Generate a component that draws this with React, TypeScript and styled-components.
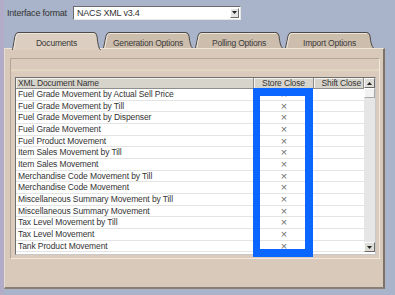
import React from "react";
import styled, { createGlobalStyle } from "styled-components";

const Global = createGlobalStyle`
  html, body { margin: 0; padding: 0; }
  body {
    background: #a9b3c9;
    font-family: "Liberation Sans", Arial, sans-serif;
    color: #333;
  }
`;

const Page = styled.div`
  position: relative;
  width: 395px;
  height: 295px;
  overflow: hidden;
  background: linear-gradient(90deg, #b2acc8 0px, #b2acc8 4px, #a9b3c9 4px);
`;

const TopRow = styled.div`
  display: flex;
  align-items: center;
  height: 15px;
  padding: 5px 0 0 7px;
`;

const Label = styled.span`
  width: 66px;
  font-size: 9px;
  letter-spacing: -0.2px;
  color: #333;
`;

const Select = styled.div`
  display: flex;
  align-items: center;
  width: 168px;
  height: 14px;
  box-sizing: border-box;
  background: #fff;
  border: 1px solid;
  border-color: #6a6a6a #e8e8e8 #e8e8e8 #6a6a6a;
  padding: 0 1px 0 3px;
  font-size: 9px;
  letter-spacing: -0.2px;
`;

const SelectText = styled.span`
  flex: 1;
`;

const DropButton = styled.span`
  width: 9px;
  height: 10px;
  box-sizing: border-box;
  background: #e4e4e4;
  border: 1px solid;
  border-color: #fff #707070 #707070 #fff;
  display: flex;
  align-items: center;
  justify-content: center;
`;

const TabBar = styled.div`
  display: flex;
  gap: 2px;
  margin-top: 12px;
  padding-left: 12px;
  height: 16px;
  position: relative;
  z-index: 2;
`;

const Tab = styled.div<{ $active?: boolean; $w: number }>`
  position: relative;
  width: ${(p) => p.$w}px;
  height: ${(p) => (p.$active ? 18 : 16)}px;
  display: flex;
  justify-content: center;
  padding-top: 6px;
  box-sizing: border-box;
  font-size: 8.5px;
  letter-spacing: -0.2px;
  color: ${(p) => (p.$active ? "#3a3a3a" : "#3c3c3c")};
  svg { position: absolute; left: 0; top: 0; z-index: -1; }
`;

const Panel = styled.div`
  position: relative;
  margin-left: 4px;
  width: 381px;
  height: 241px;
  box-sizing: border-box;
  background: #d8c9ba;
  border-top: 1px solid #eee4d8;
  border-left: 1px solid #e6dccf;
  border-right: 2px solid #7c7268;
  border-bottom: 2px solid #8a7f74;
  padding: 9px 0 0 5px;
`;

const Frame = styled.div`
  width: 370px;
  height: 201px;
  box-sizing: border-box;
  border: 1px solid;
  border-color: #b4a696 #f0e8de #f0e8de #b4a696;
  background: linear-gradient(180deg, #dacbbc 0px, #dacbbc 10px, #e6dcc4 11px, #dacbbc 13px);
  padding: 18px 0 0 4px;
`;

const List = styled.div`
  position: relative;
  display: grid;
  grid-template-columns: 238px 60px 50px 11px;
  grid-template-rows: 11px repeat(14, 11.67px);
  width: 361px;
  height: 178px;
  box-sizing: border-box;
  border: 1px solid;
  border-color: #707070 #c8c8c8 #c8c8c8 #707070;
  background: #fff;
  overflow: hidden;
`;

const Head = styled.div<{ $align: string }>`
  background: #d7d4cc;
  border-right: 1px solid #8e8e8e;
  border-bottom: 1px solid #8e8e8e;
  box-shadow: inset 1px 1px 0 #f4f2ee;
  font-size: 8.5px;
  letter-spacing: -0.15px;
  line-height: 10px;
  color: #333;
  text-align: ${(p) => p.$align};
  padding: 0 2px 0 2px;
  white-space: nowrap;
  overflow: hidden;
`;

const Cell = styled.div<{ $center?: boolean; $first?: boolean }>`
  box-sizing: border-box;
  border-bottom: 1px solid #e4e4e4;
  border-right: ${(p) => (p.$first ? "1px solid #e4e4e4" : "none")};
  font-size: ${(p) => (p.$center ? "11px" : "8.5px")};
  letter-spacing: ${(p) => (p.$center ? "0" : "-0.1px")};
  line-height: 11.5px;
  color: ${(p) => (p.$center ? "#707070" : "#333")};
  text-align: ${(p) => (p.$center ? "center" : "left")};
  padding-left: ${(p) => (p.$center ? "0" : "2px")};
  white-space: nowrap;
  overflow: hidden;
`;

const Scroll = styled.div`
  grid-column: 4;
  grid-row: 1 / span 15;
  display: flex;
  flex-direction: column;
  background: #e6e6e6;
`;

const ScrollBtn = styled.div`
  height: 10px;
  box-sizing: border-box;
  background: #dedcd6;
  border: 1px solid;
  border-color: #fafafa #6c6c6c #6c6c6c #fafafa;
  display: flex;
  align-items: center;
  justify-content: center;
`;

const Thumb = styled.div`
  height: 10px;
  box-sizing: border-box;
  background: #f2f2f2;
  border: 1px solid;
  border-color: #fff #a8a8a8 #a8a8a8 #fff;
`;

const Track = styled.div`
  flex: 1;
`;

const Highlight = styled.div`
  position: absolute;
  left: 253px;
  top: 88px;
  width: 60px;
  height: 169px;
  box-sizing: border-box;
  border: 8px solid #0a66ff;
  border-left-width: 7px;
  z-index: 5;
`;

const Tri = ({ up }: { up?: boolean }) => (
  <svg width="5" height="3" viewBox="0 0 5 3">
    <path d={up ? "M0 3 L2.5 0 L5 3 Z" : "M0 0 L5 0 L2.5 3 Z"} fill="#222" />
  </svg>
);

const TabShape = ({ w, active }: { w: number; active?: boolean }) => {
  const h = active ? 18 : 16;
  const d = `M0.5 ${h} L3 4 Q3.6 1 6 0.5 L${w - 7} 0.5 Q${w - 4.5} 0.8 ${w - 4} 4 Q${w - 3} ${h - 2} ${w - 0.5} ${h}`;
  return (
    <svg width={w} height={h} viewBox={`0 0 ${w} ${h}`}>
      <path d={`${d} Z`} fill={active ? "#dccec0" : "#cdbdac"} stroke="none" />
      <path d={d} fill="none" stroke="#4a4a4a" strokeWidth="1" />
      <path d={`M1.8 ${h} L4 4.5 Q4.5 2 6.5 1.5 L${w - 7} 1.5`} fill="none" stroke="#efe6da" strokeWidth="1" />
    </svg>
  );
};

const tabs = [
  { label: "Documents", w: 89, active: true },
  { label: "Generation Options", w: 90 },
  { label: "Polling Options", w: 88 },
  { label: "Import Options", w: 89 },
];

const docs = [
  "Fuel Grade Movement by Actual Sell Price",
  "Fuel Grade Movement by Till",
  "Fuel Grade Movement by Dispenser",
  "Fuel Grade Movement",
  "Fuel Product Movement",
  "Item Sales Movement by Till",
  "Item Sales Movement",
  "Merchandise Code Movement by Till",
  "Merchandise Code Movement",
  "Miscellaneous Summary Movement by Till",
  "Miscellaneous Summary Movement",
  "Tax Level Movement by Till",
  "Tax Level Movement",
  "Tank Product Movement",
];

export default function App() {
  return (
    <Page>
      <Global />
      <TopRow>
        <Label>Interface format</Label>
        <Select>
          <SelectText>NACS XML v3.4</SelectText>
          <DropButton>
            <Tri />
          </DropButton>
        </Select>
      </TopRow>
      <TabBar>
        {tabs.map((t) => (
          <Tab key={t.label} $active={t.active} $w={t.w}>
            <TabShape w={t.w} active={t.active} />
            {t.label}
          </Tab>
        ))}
      </TabBar>
      <Panel>
        <Frame>
          <List>
            <Head $align="left">XML Document Name</Head>
            <Head $align="center">Store Close</Head>
            <Head $align="right">Shift Close</Head>
            <Scroll>
              <ScrollBtn>
                <Tri up />
              </ScrollBtn>
              <Thumb />
              <Track />
              <ScrollBtn>
                <Tri />
              </ScrollBtn>
            </Scroll>
            {docs.map((d) => (
              <React.Fragment key={d}>
                <Cell $first>{d}</Cell>
                <Cell $center>×</Cell>
                <Cell />
              </React.Fragment>
            ))}
          </List>
        </Frame>
      </Panel>
      <Highlight />
    </Page>
  );
}
